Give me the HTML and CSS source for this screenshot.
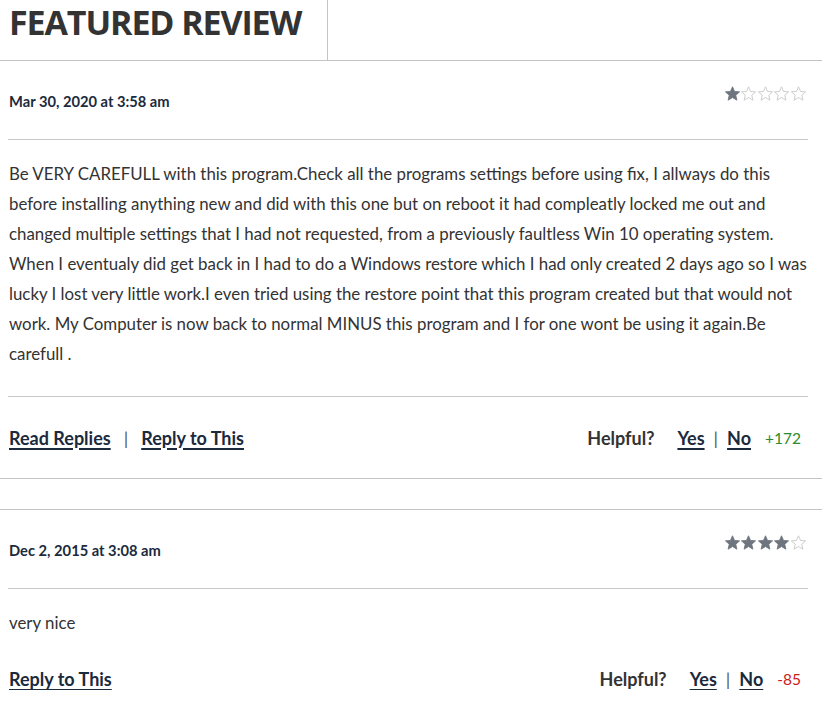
FILE: index.html
```html
<!DOCTYPE html>
<html>
<head>
<meta charset="utf-8">
<link rel="stylesheet" href="styles.css">
</head>
<body>
<div class="page">
  <div class="head-bar">
    <h2 class="head-title">FEATURED REVIEW</h2>
  </div>

  <div class="review">
    <div class="review-meta">
      <span class="review-date">Mar 30, 2020 at 3:58 am</span>
      <span class="stars">
        <svg class="star star-on" viewBox="0 0 24 24"><path d="M12 2.5l2.9 6.6 7.1.6-5.4 4.7 1.6 7-6.2-3.7-6.2 3.7 1.6-7L2 9.7l7.1-.6z"/></svg>
        <svg class="star star-off" viewBox="0 0 24 24"><path d="M12 2.5l2.9 6.6 7.1.6-5.4 4.7 1.6 7-6.2-3.7-6.2 3.7 1.6-7L2 9.7l7.1-.6z"/></svg>
        <svg class="star star-off" viewBox="0 0 24 24"><path d="M12 2.5l2.9 6.6 7.1.6-5.4 4.7 1.6 7-6.2-3.7-6.2 3.7 1.6-7L2 9.7l7.1-.6z"/></svg>
        <svg class="star star-off" viewBox="0 0 24 24"><path d="M12 2.5l2.9 6.6 7.1.6-5.4 4.7 1.6 7-6.2-3.7-6.2 3.7 1.6-7L2 9.7l7.1-.6z"/></svg>
        <svg class="star star-off" viewBox="0 0 24 24"><path d="M12 2.5l2.9 6.6 7.1.6-5.4 4.7 1.6 7-6.2-3.7-6.2 3.7 1.6-7L2 9.7l7.1-.6z"/></svg>
      </span>
    </div>
    <p class="review-body review-body-ruled">Be VERY CAREFULL with this program.Check all the programs settings before using fix, I allways do this before installing anything new and did with this one but on reboot it had compleatly locked me out and changed multiple settings that I had not requested, from a previously faultless Win 10 operating system. When I eventualy did get back in I had to do a Windows restore which I had only created 2 days ago so I was lucky I lost very little work.I even tried using the restore point that this program created but that would not work. My Computer is now back to normal MINUS this program and I for one wont be using it again.Be carefull .</p>
    <div class="review-actions">
      <div class="links">
        <a href="#" class="action-link">Read Replies</a>
        <span class="sep">|</span>
        <a href="#" class="action-link">Reply to This</a>
      </div>
      <div class="helpful">
        <span class="helpful-label">Helpful?</span>
        <a href="#" class="action-link">Yes</a>
        <span class="sep">|</span>
        <a href="#" class="action-link">No</a>
        <span class="score score-pos">+172</span>
      </div>
    </div>
  </div>

  <div class="review review-second">
    <div class="review-meta">
      <span class="review-date">Dec 2, 2015 at 3:08 am</span>
      <span class="stars">
        <svg class="star star-on" viewBox="0 0 24 24"><path d="M12 2.5l2.9 6.6 7.1.6-5.4 4.7 1.6 7-6.2-3.7-6.2 3.7 1.6-7L2 9.7l7.1-.6z"/></svg>
        <svg class="star star-on" viewBox="0 0 24 24"><path d="M12 2.5l2.9 6.6 7.1.6-5.4 4.7 1.6 7-6.2-3.7-6.2 3.7 1.6-7L2 9.7l7.1-.6z"/></svg>
        <svg class="star star-on" viewBox="0 0 24 24"><path d="M12 2.5l2.9 6.6 7.1.6-5.4 4.7 1.6 7-6.2-3.7-6.2 3.7 1.6-7L2 9.7l7.1-.6z"/></svg>
        <svg class="star star-on" viewBox="0 0 24 24"><path d="M12 2.5l2.9 6.6 7.1.6-5.4 4.7 1.6 7-6.2-3.7-6.2 3.7 1.6-7L2 9.7l7.1-.6z"/></svg>
        <svg class="star star-off" viewBox="0 0 24 24"><path d="M12 2.5l2.9 6.6 7.1.6-5.4 4.7 1.6 7-6.2-3.7-6.2 3.7 1.6-7L2 9.7l7.1-.6z"/></svg>
      </span>
    </div>
    <p class="review-body">very nice</p>
    <div class="review-actions review-actions-last">
      <div class="links">
        <a href="#" class="action-link">Reply to This</a>
      </div>
      <div class="helpful">
        <span class="helpful-label">Helpful?</span>
        <a href="#" class="action-link">Yes</a>
        <span class="sep">|</span>
        <a href="#" class="action-link">No</a>
        <span class="score score-neg">-85</span>
      </div>
    </div>
  </div>
</div>
</body>
</html>
```

FILE: styles.css
```css
* { box-sizing: border-box; }
html, body { margin: 0; padding: 0; background: #fff; }
body {
  font-family: Lato, "Liberation Sans", sans-serif;
  color: #333;
  overflow: hidden;
}
.page { width: 822px; }

.head-bar {
  height: 61px;
  border-bottom: 1px solid #c4c4c4;
}
.head-title {
  margin: 0;
  display: inline-block;
  height: 60px;
  width: 328px;
  padding: 0 0 0 9px;
  border-right: 1px solid #c4c4c4;
  font-family: "Open Sans", sans-serif;
  font-weight: 700;
  font-size: 34px;
  line-height: 44px;
  color: #333;
  letter-spacing: -1.1px;
}

.review {
  border-bottom: 1px solid #c4c4c4;
}
.review-second {
  border-top: 1px solid #c4c4c4;
  border-bottom: none;
  margin-top: 30px;
}

.review-meta {
  margin: 0 14px 0 8px;
  height: 79px;
  display: flex;
  justify-content: space-between;
  align-items: flex-start;
  border-bottom: 1px solid #c8c8c8;
}
.review-date {
  margin-top: 31px;
  padding-left: 1px;
  font-size: 14.7px;
  font-weight: 700;
  color: #1b2a3c;
  line-height: 18px;
}
.stars {
  display: flex;
  margin-top: 24px;
  margin-right: 1px;
}
.star { width: 17px; height: 17px; margin-left: -0.4px; }
.star-on path { fill: #6e757e; stroke: #6e757e; stroke-width: 1.2; }
.star-off path { fill: #fff; stroke: #c9c9c9; stroke-width: 1.3; }

.review-body {
  margin: 0 14px 0 8px;
  padding: 19px 0 0 1px;
  font-size: 16.85px;
  line-height: 30px;
  color: #333;
}
.review-body-ruled {
  padding-bottom: 27px;
  border-bottom: 1px solid #c8c8c8;
}

.review-actions {
  margin: 0 21px 0 9px;
  height: 81px;
  display: flex;
  justify-content: space-between;
  align-items: center;
  font-size: 18px;
}
.review-actions-last {
  height: auto;
  padding-top: 30px;
}
.links, .helpful {
  display: flex;
  align-items: center;
}
.action-link {
  color: #1b2a3c;
  font-weight: 700;
  text-decoration: underline;
  text-decoration-thickness: 2px;
  text-underline-offset: 3px;
}
.sep {
  color: #555;
  margin: 0 13px;
  font-weight: 400;
}
.helpful .sep { margin: 0 9px 0 9px; }
.helpful-label {
  font-weight: 700;
  color: #333;
  margin-right: 23px;
}
.score { margin-left: 14px; font-weight: 400; font-size: 15.5px; }
.score-pos { color: #2b8a2b; }
.score-neg { color: #cc2020; }
```
